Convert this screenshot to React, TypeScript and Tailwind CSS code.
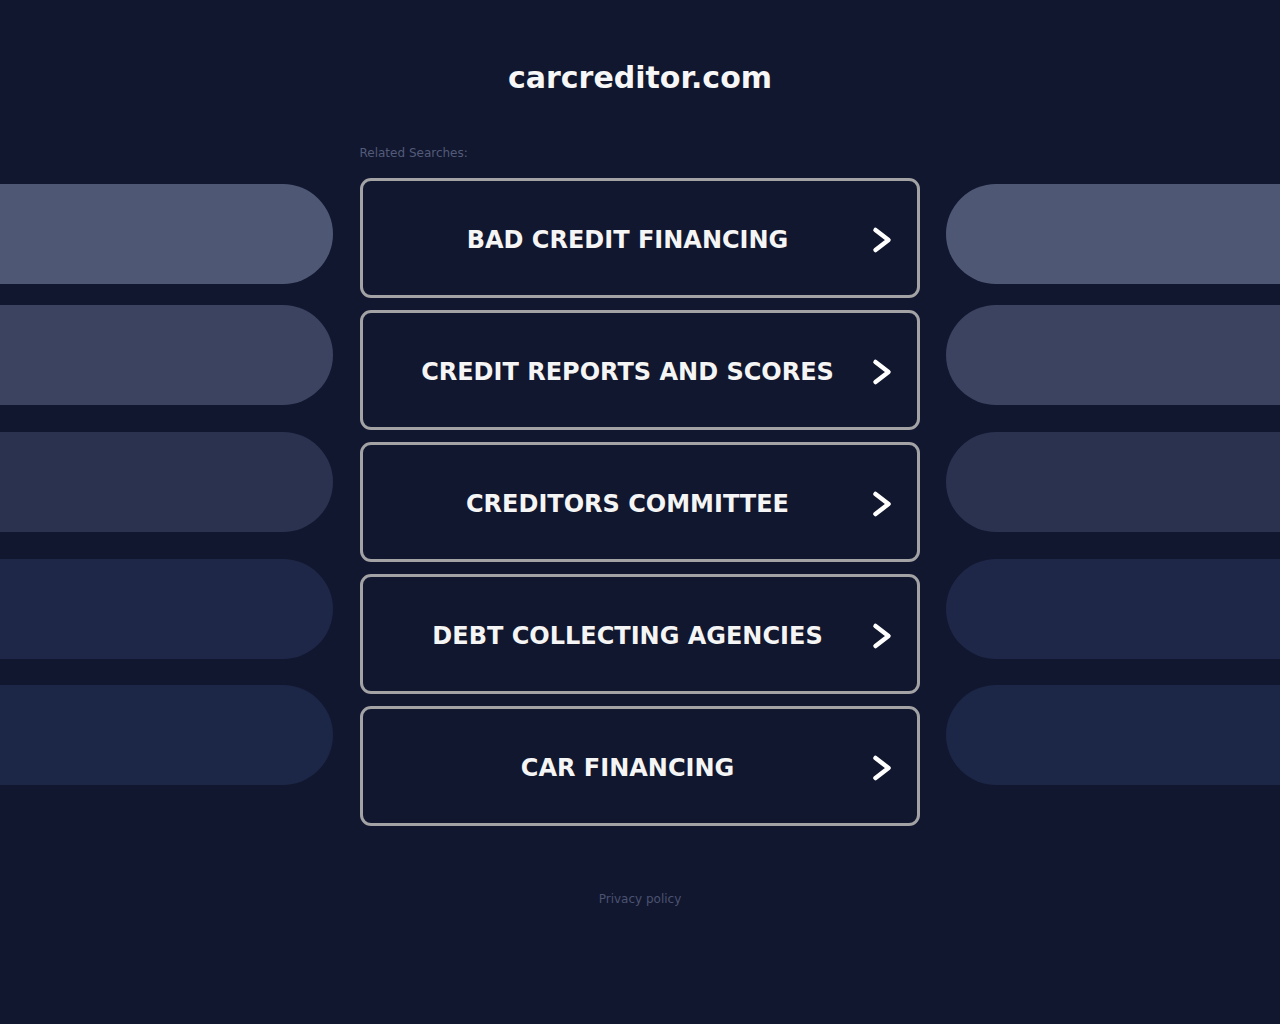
const searches = [
  "BAD CREDIT FINANCING",
  "CREDIT REPORTS AND SCORES",
  "CREDITORS COMMITTEE",
  "DEBT COLLECTING AGENCIES",
  "CAR FINANCING",
];

const pills = [
  { color: "bg-[#4e5875]", margin: "mt-[6px]" },
  { color: "bg-[#3b4361]", margin: "mt-[21px]" },
  { color: "bg-[#2a3250]", margin: "mt-[27px]" },
  { color: "bg-[#1e2748]", margin: "mt-[27px]" },
  { color: "bg-[#1c2646]", margin: "mt-[26px]" },
];

function Chevron() {
  return (
    <svg width="22" height="30" viewBox="0 0 22 30" fill="none" className="shrink-0">
      <path
        d="M4.5 5 L17.5 15 L4.5 25"
        stroke="#ffffff"
        strokeWidth="4.5"
        strokeLinecap="round"
        strokeLinejoin="round"
      />
    </svg>
  );
}

function PillColumn({ side }: { side: "left" | "right" }) {
  return (
    <div className="flex flex-col">
      {pills.map((pill, i) => (
        <div
          key={i}
          className={`${pill.margin} ${pill.color} h-[100px] ${
            side === "left"
              ? "w-[333px] rounded-r-[50px]"
              : "w-[334px] rounded-l-[50px]"
          }`}
        />
      ))}
    </div>
  );
}

export default function App() {
  return (
    <main
      className="min-h-[1024px] w-full bg-[#11172e] text-white"
      style={{ fontFamily: '"DejaVu Sans", sans-serif' }}
    >
      <header className="flex justify-center pt-[59px]">
        <h1 className="text-[30px] font-bold leading-[38px] text-[#f7f7f7]">
          carcreditor.com
        </h1>
      </header>

      <div className="mt-[49px] flex justify-between">
        <div className="pt-[32px]">
          <PillColumn side="left" />
        </div>

        <section className="flex w-[560px] flex-col">
          <p className="h-[32px] text-[12px] leading-[14px] text-[#535b7a]">
            Related Searches:
          </p>
          <div className="flex flex-col gap-[12px]">
            {searches.map((label) => (
              <a
                key={label}
                href="#"
                className="flex h-[120px] items-center rounded-[11px] border-[3px] border-[#a3a3a6] pl-[42px] pr-[24px] pt-[4px]"
              >
                <span className="flex-1 text-center text-[24px] font-bold text-[#f5f5f5]">
                  {label}
                </span>
                <span className="ml-[20px]">
                  <Chevron />
                </span>
              </a>
            ))}
          </div>
        </section>

        <div className="pt-[32px]">
          <PillColumn side="right" />
        </div>
      </div>

      <footer className="mt-[63px] flex justify-center">
        <a href="#" className="text-[12px] leading-[20px] text-[#4b5272]">
          Privacy policy
        </a>
      </footer>
    </main>
  );
}
